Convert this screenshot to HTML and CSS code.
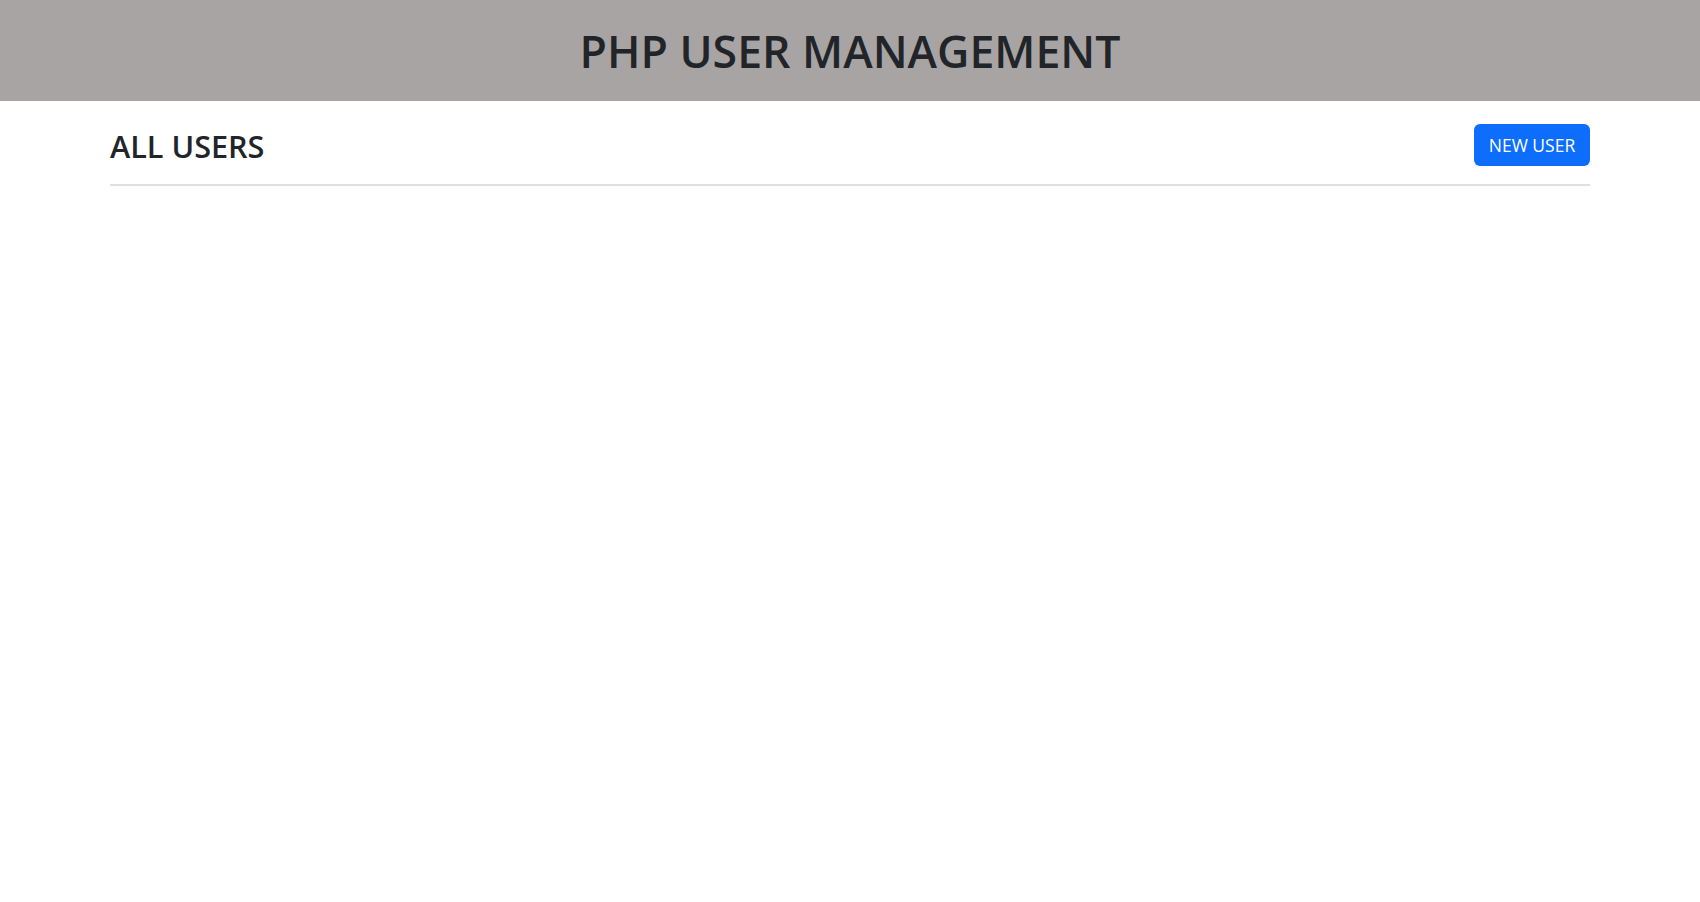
FILE: index.html
```html
<!DOCTYPE html>
<html lang="en">
<head>
<meta charset="utf-8">
<title>PHP User Management</title>
<link rel="stylesheet" href="styles.css">
</head>
<body>
<header class="site-header">
  <h1 class="site-title">PHP USER MANAGEMENT</h1>
</header>
<main class="container">
  <div class="page-head">
    <h2 class="page-title">ALL USERS</h2>
    <a class="btn-primary" href="#">NEW USER</a>
  </div>
  <hr class="divider">
</main>
</body>
</html>
```
FILE: styles.css
```css
* { box-sizing: border-box; }
html, body { margin: 0; padding: 0; }
body {
  font-family: "Open Sans", "Noto Sans", sans-serif;
  color: #212529;
  background: #fff;
}
.site-header {
  height: 101px;
  background: #a8a4a3;
  display: flex;
  align-items: center;
  justify-content: center;
  padding-top: 1px;
}
.site-title {
  margin: 0;
  font-size: 44.6px;
  font-weight: 600;
  line-height: 1.2;
  color: #212529;
}
.container {
  padding: 0 110px;
}
.page-head {
  display: flex;
  align-items: center;
  justify-content: space-between;
  padding-top: 23px;
  height: 65px;
}
.page-title {
  margin: 0;
  font-size: 30.6px;
  font-weight: 600;
  line-height: 1.2;
  padding-top: 3px;
}
.btn-primary {
  display: inline-flex;
  align-items: center;
  justify-content: center;
  width: 116px;
  height: 42px;
  background: #0d6efd;
  color: #fff;
  font-size: 17.5px;
  text-decoration: none;
  border-radius: 6px;
}
.divider {
  margin: 18px 0 0;
  border: 0;
  border-top: 2px solid #e0e0e0;
}
```
